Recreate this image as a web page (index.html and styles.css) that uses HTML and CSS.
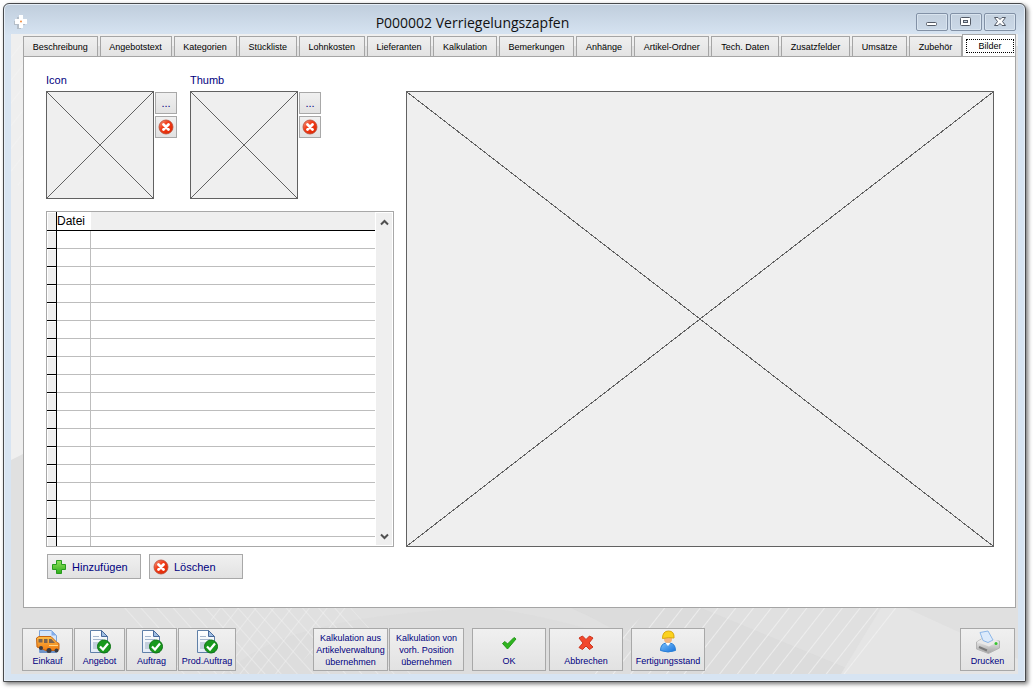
FILE: index.html
```html
<!DOCTYPE html>
<html lang="de">
<head>
<meta charset="utf-8">
<title>P000002 Verriegelungszapfen</title>
<link rel="stylesheet" href="styles.css">
</head>
<body>
<svg class="defs" aria-hidden="true">
  <defs>
    <linearGradient id="red" x1="0" y1="0" x2="1" y2="1"><stop offset="0" stop-color="#f6a48c"/><stop offset=".4" stop-color="#f23c18"/><stop offset="1" stop-color="#dc2400"/></linearGradient>
    <linearGradient id="green" x1="0" y1="0" x2="0" y2="1"><stop offset="0" stop-color="#8fe05a"/><stop offset="1" stop-color="#2fae1c"/></linearGradient>
    <linearGradient id="orange" x1="0" y1="0" x2="0" y2="1"><stop offset="0" stop-color="#ffbe4a"/><stop offset="1" stop-color="#ee7a10"/></linearGradient>
    <linearGradient id="paper" x1="0" y1="0" x2="0" y2="1"><stop offset="0" stop-color="#ffffff"/><stop offset="1" stop-color="#e3ebf6"/></linearGradient>
    <linearGradient id="blue" x1="0" y1="0" x2="1" y2="1"><stop offset="0" stop-color="#7cc0fb"/><stop offset="1" stop-color="#1673dd"/></linearGradient>
    <linearGradient id="grey" x1="0" y1="0" x2="0" y2="1"><stop offset="0" stop-color="#f4f4f4"/><stop offset="1" stop-color="#a2a2a2"/></linearGradient>
    <pattern id="hatch" width="14" height="14" patternUnits="userSpaceOnUse" patternTransform="rotate(38)"><path d="M0 0V14" stroke="#f2f2f2" stroke-width="2"/></pattern>
    <pattern id="hatch-back" width="12" height="12" patternUnits="userSpaceOnUse" patternTransform="rotate(-42)"><path d="M0 0V12" stroke="#efefef" stroke-width="2"/></pattern>
    <symbol id="delete" viewBox="0 0 16 16"><circle cx="8" cy="8" r="7" fill="url(#red)" stroke="#b94a35" stroke-width=".8"/><path d="M5.500 5.500l5 5M10.500 5.500l-5 5" stroke="#fff" stroke-width="2.800" stroke-linecap="round"/></symbol>
    <symbol id="document" viewBox="0 0 24 24">
      <path d="M2.500 .5h11l6 6v16h-17z" fill="url(#paper)" stroke="#6080a8"/><path d="M13.500 .5v6h6z" fill="#9fbfe4" stroke="#48699a"/>
      <path d="M5 9.500h10M5 6.500h6" stroke="#a3b5cc"/><path d="M5 12h5v7H5z" fill="#c3cfdd"/><path d="M12 12.500h6M12 14.500h4" stroke="#a3b5cc"/>
      <circle cx="16" cy="16.500" r="6.500" fill="#18991c" stroke="#0b7312"/><path d="M12 16.500l3 3 5-6" fill="none" stroke="#fff" stroke-width="2.200"/>
    </symbol>
  </defs>
</svg>
<main class="window">
  <header class="titlebar">
    <svg class="app-icon" viewBox="0 0 16 16" aria-hidden="true"><path d="M4 3h4v4h4v4H8v4H4v-4H1V7h3z" fill="#b5bec8"/><path d="M6 1h4v4h4v5h-4v4H6v-4H2V5h4z" fill="#fff"/><circle cx="8" cy="7.500" r="1" fill="#f28a3c"/></svg>
    <h1 class="title">P000002 Verriegelungszapfen</h1>
    <div class="window-controls">
      <button class="window-button" aria-label="Minimieren"><svg class="control-icon" viewBox="0 0 16 12"><rect x="2.500" y="6.500" width="10" height="3" rx="1" fill="#fff" stroke="#535a66"/></svg></button>
      <button class="window-button" aria-label="Maximieren"><svg class="control-icon" viewBox="0 0 16 12"><rect x="2.500" y="1.500" width="10" height="8" rx="1" fill="#fff" stroke="#535a66"/><rect x="5.500" y="4.500" width="4" height="2" fill="#c6d3e1" stroke="#535a66"/></svg></button>
      <button class="window-button" aria-label="Schließen"><svg class="control-icon" viewBox="0 0 16 12"><path d="M2.500 1.500h3.500l2 2 2-2h3.500L10.500 5.500l3 4h-3.500l-2-2-2 2H2.500l3-4z" fill="#fff" stroke="#535a66"/></svg></button>
    </div>
  </header>
  <div class="client">
    <svg class="backdrop" viewBox="0 0 1007 640" preserveAspectRatio="xMidYMax slice" aria-hidden="true">
      <rect width="1007" height="640" fill="#e0e0e0"/>
      <path d="M0 0H1007V12H0zM0 0H12V420L0 426z" fill="#efefef"/>
      <path d="M0 0H12V160L0 140z" fill="url(#hatch)"/>
      <path d="M215 640Q270 580 480 574Q590 590 700 640z" fill="#dcdcdc" opacity=".7"/>
      <path d="M110 574H340L400 640H170z" fill="url(#hatch-back)" opacity=".6"/>
      <path d="M200 574H340L280 640H200z" fill="url(#hatch)" opacity=".5"/>
      <path d="M560 574H690L850 640H660Q620 600 560 574z" fill="#d8d8d8" opacity=".5"/>
      <path d="M870 574H895L1007 625V640H830z" fill="#e5e5e5"/>
      <path d="M570 640L640 574H890L840 640z" fill="url(#hatch)" opacity=".75"/>
    </svg>
    <nav class="tabs" role="tablist">
      <button class="tab" role="tab">Beschreibung</button>
      <button class="tab" role="tab">Angebotstext</button>
      <button class="tab" role="tab">Kategorien</button>
      <button class="tab" role="tab">Stückliste</button>
      <button class="tab" role="tab">Lohnkosten</button>
      <button class="tab" role="tab">Lieferanten</button>
      <button class="tab" role="tab">Kalkulation</button>
      <button class="tab" role="tab">Bemerkungen</button>
      <button class="tab" role="tab">Anhänge</button>
      <button class="tab" role="tab">Artikel-Ordner</button>
      <button class="tab" role="tab">Tech. Daten</button>
      <button class="tab" role="tab">Zusatzfelder</button>
      <button class="tab" role="tab">Umsätze</button>
      <button class="tab" role="tab">Zubehör</button>
      <button class="tab tab-active" role="tab" aria-selected="true"><span class="tab-focus">Bilder</span></button>
    </nav>
    <section class="panel" role="tabpanel">
      <div class="left">
        <div class="pictures">
          <div class="picture">
            <h2 class="caption">Icon</h2>
            <div class="picture-row">
              <svg class="placeholder thumb" viewBox="0 0 100 100" preserveAspectRatio="none" role="img" aria-label="Kein Icon"><path class="cross" d="M0 0L100 100M100 0L0 100"/></svg>
              <div class="picture-actions">
                <button class="button small" aria-label="Icon wählen">...</button>
                <button class="button small" aria-label="Icon löschen"><svg class="icon16"><use href="#delete"/></svg></button>
              </div>
            </div>
          </div>
          <div class="picture">
            <h2 class="caption">Thumb</h2>
            <div class="picture-row">
              <svg class="placeholder thumb" viewBox="0 0 100 100" preserveAspectRatio="none" role="img" aria-label="Kein Thumb"><path class="cross" d="M0 0L100 100M100 0L0 100"/></svg>
              <div class="picture-actions">
                <button class="button small" aria-label="Thumb wählen">...</button>
                <button class="button small" aria-label="Thumb löschen"><svg class="icon16"><use href="#delete"/></svg></button>
              </div>
            </div>
          </div>
        </div>
        <div class="list">
          <div class="list-view">
            <table class="files">
              <thead><tr><th class="mark"></th><th class="name">Datei</th><th class="rest"></th></tr></thead>
              <tbody>
                <tr><td class="mark"></td><td></td><td></td></tr>
                <tr><td class="mark"></td><td></td><td></td></tr>
                <tr><td class="mark"></td><td></td><td></td></tr>
                <tr><td class="mark"></td><td></td><td></td></tr>
                <tr><td class="mark"></td><td></td><td></td></tr>
                <tr><td class="mark"></td><td></td><td></td></tr>
                <tr><td class="mark"></td><td></td><td></td></tr>
                <tr><td class="mark"></td><td></td><td></td></tr>
                <tr><td class="mark"></td><td></td><td></td></tr>
                <tr><td class="mark"></td><td></td><td></td></tr>
                <tr><td class="mark"></td><td></td><td></td></tr>
                <tr><td class="mark"></td><td></td><td></td></tr>
                <tr><td class="mark"></td><td></td><td></td></tr>
                <tr><td class="mark"></td><td></td><td></td></tr>
                <tr><td class="mark"></td><td></td><td></td></tr>
                <tr><td class="mark"></td><td></td><td></td></tr>
                <tr><td class="mark"></td><td></td><td></td></tr>
                <tr><td class="mark"></td><td></td><td></td></tr>
              </tbody>
            </table>
          </div>
          <div class="scrollbar">
            <button class="scroll-button" aria-label="Nach oben"><svg class="arrow" viewBox="0 0 9 7"><path d="M1 5.500L4.500 2 8 5.500" fill="none" stroke="#505050" stroke-width="2"/></svg></button>
            <button class="scroll-button" aria-label="Nach unten"><svg class="arrow" viewBox="0 0 9 7"><path d="M1 1.500L4.500 5 8 1.500" fill="none" stroke="#505050" stroke-width="2"/></svg></button>
          </div>
        </div>
        <div class="list-actions">
          <button class="button wide"><svg class="icon16" viewBox="0 0 16 16"><path d="M5.500 1.500h5v4h4v5h-4v4h-5v-4h-4v-5h4z" fill="url(#green)" stroke="#279b1d"/></svg>Hinzufügen</button>
          <button class="button wide"><svg class="icon16"><use href="#delete"/></svg>Löschen</button>
        </div>
      </div>
      <svg class="placeholder preview" viewBox="0 0 100 100" preserveAspectRatio="none" role="img" aria-label="Keine Vorschau"><path class="cross" d="M0 0L100 100M100 0L0 100"/></svg>
    </section>
    <footer class="toolbar">
      <div class="group group-documents">
        <button class="button tool narrow"><svg class="icon24" viewBox="0 0 24 24"><path d="M3.500 .5h12l5 5v17h-17z" fill="#d5e5fa" stroke="#7da4d8"/><path d="M15.500 .5v5h5z" fill="#84adea"/><path d="M4 19h16v4H4z" fill="#6f94c9"/><path d="M.5 8L3 6.500h12l6 6 2 1v6l-2 1H10L1 17z" fill="url(#orange)" stroke="#c76512"/><path d="M2.500 9h4v3.500h-4zM8 9h3.500v4H8zM13 9h2.500l3.500 4h-6z" fill="#7b6350"/><path d="M13 15.500h9" stroke="#ffd488"/><circle cx="5" cy="18" r="2" fill="#3a3a40"/><circle cx="13" cy="20.500" r="2.500" fill="#3a3a40"/><circle cx="20.500" cy="20.500" r="2" fill="#3a3a40"/></svg>Einkauf</button>
        <button class="button tool narrow"><svg class="icon24"><use href="#document"/></svg>Angebot</button>
        <button class="button tool narrow"><svg class="icon24"><use href="#document"/></svg>Auftrag</button>
        <button class="button tool order"><svg class="icon24"><use href="#document"/></svg>Prod.Auftrag</button>
      </div>
      <div class="group group-center">
        <div class="group">
          <button class="button tool text">Kalkulation aus Artikelverwaltung übernehmen</button>
          <button class="button tool text">Kalkulation von vorh. Position übernehmen</button>
        </div>
        <div class="group group-confirm">
          <button class="button tool medium"><svg class="icon16" viewBox="0 0 16 16"><path d="M1.500 8.500L4 6.500l2.500 2.500L13 2.500l2 1.500L6.500 14z" fill="#2fb51f" stroke="#239718"/></svg>OK</button>
          <button class="button tool medium"><svg class="icon16" viewBox="0 0 16 16"><path d="M1 3L4.500 1 8 4.500l3.500-3.500 3.500 2L11 8l4 4-3.500 2.500L8 11l-3.500 3.500L1 12.500 5 8z" fill="#f2482c" stroke="#cc341d"/></svg>Abbrechen</button>
        </div>
        <button class="button tool medium"><svg class="icon24" viewBox="0 0 24 24"><path d="M4.500 20.500q0-7 6-7.500h3q6 .5 6 7.500-7.500 3-15 0z" fill="url(#blue)" stroke="#2a7fd4"/><path d="M9.500 13h5L12 16z" fill="#fff"/><circle cx="12" cy="9" r="4" fill="#f6b57c"/><path d="M6.500 8.500q0-7.500 6-7.500t5.500 7q-5-1-11.500 .5z" fill="#fbd21e" stroke="#d9a80c"/></svg>Fertigungsstand</button>
      </div>
      <button class="button tool narrow"><svg class="icon24" viewBox="0 0 24 24"><path d="M.5 12l5-3 18 2v7l-11 5.500L.5 19z" fill="url(#grey)" stroke="#b5b5b5"/><path d="M1 12l12 4.500 10-5.500-6-2H6z" fill="#e9e9e9"/><path d="M7 10.500L4 2.500 12 1l5 9-5 2.500z" fill="#dceafb" stroke="#8db7e8"/><path d="M3 17l8 3.500" stroke="#7a7a7a" stroke-width="2"/><circle cx="20" cy="13.500" r="1.500" fill="#35c52d"/></svg>Drucken</button>
    </footer>
  </div>
</main>
</body>
</html>
```
FILE: styles.css
```css
* { box-sizing: border-box; }
body {
  margin: 0;
  height: 100vh;
  padding: 3px 8px 8px 3px;
  display: flex;
  background: #fff;
  font-family: "Liberation Sans", Arial, sans-serif;
  font-size: 9px;
}
.defs { position: absolute; width: 0; height: 0; }
button { font: inherit; padding: 0; margin: 0; }
.window {
  flex: 1;
  min-width: 0;
  display: flex;
  flex-direction: column;
  padding: 0 7px 7px;
  border: 1px solid #47494c;
  border-radius: 6px 6px 0 0;
  background: linear-gradient(#bfcddc, #d7e4f2 32px);
  box-shadow: inset 0 0 0 1px #e6eef7, 2px 2px 4px #777;
}
.titlebar {
  height: 30px;
  display: flex;
  align-items: center;
}
.app-icon { width: 16px; height: 16px; flex: none; margin: 6px 0 0 2px; }
.title {
  flex: 1;
  margin: 7px 0 0;
  color: #111;
  font: 400 14px/20px "Open Sans", "Noto Sans", sans-serif;
  text-align: center;
}
.window-controls { display: flex; gap: 2px; padding: 6px 2px 0 0; }
.window-button {
  width: 32px;
  height: 18px;
  display: flex;
  align-items: center;
  justify-content: center;
  border: 1px solid #8291a6;
  border-radius: 2px;
  background: linear-gradient(#c3d0de, #cbd9e8);
  box-shadow: inset 0 0 0 1px #d9e4ef;
}
.control-icon { width: 16px; height: 12px; }
.client {
  flex: 1;
  min-height: 0;
  position: relative;
  isolation: isolate;
  display: flex;
  flex-direction: column;
  padding: 0 2px 0 12px;
}
.backdrop { position: absolute; inset: 0; width: 100%; height: 100%; z-index: -1; }
.tabs { display: flex; gap: 2px; align-items: flex-end; height: 22px; }
.tab {
  flex: 1 0 auto;
  height: 20px;
  padding: 0 7px;
  border: 1px solid #a5a5a5;
  border-bottom: 0;
  background: linear-gradient(#efefef, #e3e3e3);
  color: #000;
  white-space: nowrap;
}
.tab-active {
  flex: 0 0 54px;
  height: 23px;
  margin: 0 0 -1px -2px;
  padding: 3px 1px 4px 3px;
  background: #fff;
}
.tab-focus { display: block; height: 14px; line-height: 12px; border: 1px dotted #000; }
.panel {
  flex: 1;
  min-height: 0;
  display: flex;
  gap: 12px;
  padding: 16px 21px 28px 22px;
  border: 1px solid #a5a5a5;
  background: #fff;
}
.left { width: 348px; flex: none; display: flex; flex-direction: column; }
.pictures { display: flex; gap: 13px; }
.caption {
  margin: 0 0 4px;
  color: #000080;
  font: 400 11px/14px "Liberation Sans", Arial, sans-serif;
}
.picture-row { display: flex; gap: 1px; }
.picture-actions { display: flex; flex-direction: column; gap: 2px; padding-top: 1px; }
.placeholder { border: 1px solid #616161; background: #efefef; }
.cross { fill: none; stroke: #616161; stroke-width: 1; vector-effect: non-scaling-stroke; shape-rendering: crispEdges; }
.thumb { width: 108px; height: 108px; }
.preview { flex: 1; min-width: 0; height: auto; margin: 18px 0 32px; }
.button {
  border: 1px solid #a8a8a8;
  background: linear-gradient(#f0f0f0, #e2e2e2);
  color: #000080;
}
.small { width: 22px; height: 22px; display: flex; align-items: center; justify-content: center; font-size: 11px; }
.icon16 { width: 16px; height: 16px; flex: none; }
.icon24 { width: 24px; height: 24px; flex: none; }
.list {
  flex: 1;
  min-height: 0;
  display: flex;
  margin-top: 12px;
  border: 1px solid #a8a8a8;
}
.list-view { flex: 1; overflow: hidden; }
.files {
  width: 100%;
  table-layout: fixed;
  border-collapse: separate;
  border-spacing: 0;
  font: 400 12px/16px "Liberation Sans", Arial, sans-serif;
}
.files th { height: 19px; padding: 0; border-bottom: 1px solid #000; background: #efefef; font-weight: 400; text-align: left; }
.files td { height: 18px; padding: 0; border-bottom: 1px solid #bdbdbd; border-right: 1px solid #bdbdbd; }
.files td:last-child { border-right: 0; }
.files .mark { width: 10px; border-right: 1px solid #000; border-bottom-color: #000; background: #efefef; box-shadow: inset 1px 1px #fff; }
.files .name { width: 34px; background: #fff; }
.scrollbar {
  width: 18px;
  display: flex;
  flex-direction: column;
  justify-content: space-between;
  border: 1px solid #fff;
  background: #efefef;
}
.scroll-button { height: 18px; border: 0; background: none; display: flex; align-items: center; justify-content: center; }
.arrow { width: 9px; height: 7px; }
.list-actions { display: flex; gap: 8px; padding: 7px 0 0 1px; }
.wide {
  width: 94px;
  height: 25px;
  display: flex;
  align-items: center;
  gap: 5px;
  padding: 0 3px;
  font-size: 11px;
}
.toolbar { display: flex; justify-content: space-between; padding: 20px 0 3px; }
.toolbar > .button:last-child { margin-right: 1px; width: 55px; }
.group { display: flex; gap: 1px; }
.group-documents { margin-left: -1px; }
.group-center { gap: 8px; margin-right: 178px; }
.group-confirm { gap: 3px; }
.tool {
  height: 43px;
  display: flex;
  flex-direction: column;
  align-items: center;
  justify-content: flex-end;
  gap: 1px;
  padding-bottom: 3px;
  line-height: 12px;
  white-space: nowrap;
}
.narrow { width: 51px; }
.order { width: 58px; }
.medium { width: 74px; }
.medium .icon16 { margin-bottom: 3px; }
.text { width: 75px; display: block; padding: 0; white-space: normal; }
```
